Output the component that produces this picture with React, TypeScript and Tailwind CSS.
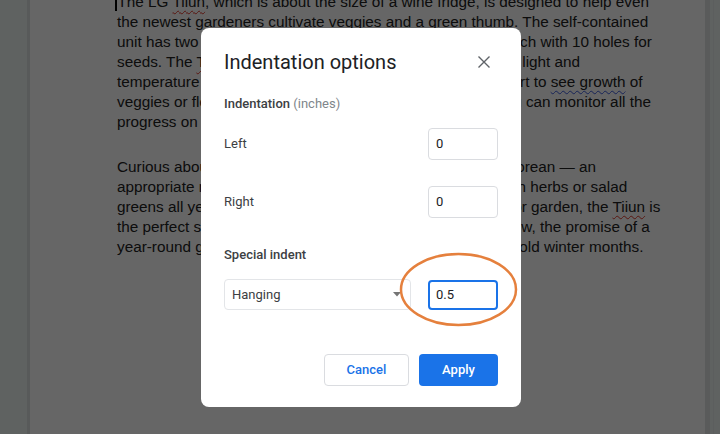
import React from "react";

const spell = "underline decoration-wavy decoration-[#e0392b] decoration-1 underline-offset-[3px]";
const grammar = "underline decoration-wavy decoration-[#3b5bdb] decoration-1 underline-offset-[3px]";

const DocPage = () => (
    <div className="flex h-[434px] w-[720px] overflow-hidden bg-[#eef5f2]">
        <div className="w-[27px] shrink-0" />
        <div className="w-[3px] shrink-0 bg-[#dde2e0]" />
        <div className="flex-1 bg-white pl-[87px]">
            <div
                className="-mt-[8px] text-[15.3px] leading-[20px] text-[#222] whitespace-nowrap"
                style={{ fontFamily: '"Liberation Sans", Arial, sans-serif' }}
            >
                <div>
                    <span className="inline-block w-[1.5px] h-[19px] bg-black -ml-[2px] mr-[1px] align-[-4px]" />
                    The LG <span className={spell}>Tiiun</span>, which is about the size of a wine fridge, is designed to help even
                </div>
                <div>the newest gardeners cultivate veggies and a green thumb. The self-contained</div>
                <div>unit has two growing beds, which come with a seed mat, each with 10 holes for</div>
                <div>
                    seeds. The <span className={spell}>Tiiun</span> uses its own LED lamps to ensure optimal light and
                </div>
                <div>
                    temperature for the plants, and so owners can expect to start to <span className={grammar}>see growth</span> of
                </div>
                <div>veggies or flowers within two weeks. Using its own app, you can monitor all the</div>
                <div>progress on the smartphone.</div>
                <div className="h-[25px]" />
                <div>Curious about the Tiiun? Right now it's coming out first in Korean — an</div>
                <div>appropriate market for a new gadget that lets you grow fresh herbs or salad</div>
                <div>
                    greens all year-round. If you are in need of a compact indoor garden, the <span className={spell}>Tiiun</span> is
                </div>
                <div>the perfect solution: even as you're snowed in by heavy snow, the promise of a</div>
                <div>year-round garden can help you to get through those long cold winter months.</div>
            </div>
        </div>
        <div className="w-[5px] shrink-0 bg-[#e2e4e4]" />
        <div className="w-[10px] shrink-0 bg-[#eef5f2] flex">
            <div className="w-[3px]" />
            <div className="w-px bg-[#e6eceb]" />
        </div>
    </div>
);

const IndentDialog = () => (
    <div
        className="absolute left-[201px] top-[28px] w-[320px] h-[379px] rounded-[8px] bg-white px-[23px] pt-[20px] flex flex-col"
        style={{ fontFamily: 'Roboto, "Open Sans", Arial, sans-serif' }}
    >
        <div className="flex items-center justify-between h-[28px]">
            <div className="text-[20px] text-[#202124]">Indentation options</div>
            <svg width="14" height="14" viewBox="0 0 14 14" className="mr-[7px]">
                <path d="M1.5 1.5 L12.5 12.5 M12.5 1.5 L1.5 12.5" stroke="#5f6368" strokeWidth="1.4" fill="none" />
            </svg>
        </div>

        <div className="mt-[18px] h-[20px] leading-[20px] text-[13px]">
            <span className="font-medium text-[#3c4043]">Indentation</span>{" "}
            <span className="text-[#80868b]">(inches)</span>
        </div>

        <div className="mt-[14px] flex items-center justify-between">
            <span className="text-[13px] text-[#3c4043]">Left</span>
            <div className="w-[70px] h-[32px] rounded-[4px] border border-[#dadce0] pl-[7px] flex items-center text-[13px] text-[#202124]">
                0
            </div>
        </div>

        <div className="mt-[26px] flex items-center justify-between">
            <span className="text-[13px] text-[#3c4043]">Right</span>
            <div className="w-[70px] h-[32px] rounded-[4px] border border-[#dadce0] pl-[7px] flex items-center text-[13px] text-[#202124]">
                0
            </div>
        </div>

        <div className="mt-[27px] h-[20px] leading-[20px] text-[13px] font-medium text-[#3c4043]">Special indent</div>

        <div className="mt-[14px] flex items-center justify-between">
            <div className="w-[187px] h-[31px] rounded-[4px] border border-[#e3e5e8] pl-[7px] pr-[9px] flex items-center justify-between text-[13px] text-[#3c4043]">
                <span>Hanging</span>
                <svg width="8" height="5" viewBox="0 0 8 5">
                    <path d="M0 0 L8 0 L4 4.5 Z" fill="#757575" />
                </svg>
            </div>
            <div className="w-[70px] h-[30px] rounded-[4px] border-2 border-[#1a73e8] pl-[6px] flex items-center text-[13px] text-[#202124]">
                0.5
            </div>
        </div>

        <div className="mt-[44px] flex justify-end gap-[10px]">
            <button className="w-[85px] h-[32px] rounded-[4px] border border-[#dadce0] bg-white text-[13px] font-medium text-[#1a73e8]">
                Cancel
            </button>
            <button className="w-[79px] h-[32px] rounded-[4px] bg-[#1a73e8] text-[13px] font-medium text-white">
                Apply
            </button>
        </div>
    </div>
);

export default function App() {
    return (
        <div className="relative w-[720px] h-[434px] overflow-hidden">
            <DocPage />
            {/* modal scrim */}
            <div className="absolute inset-0 bg-black/60" />
            <IndentDialog />
            {/* annotation circle */}
            <svg className="absolute left-0 top-0 pointer-events-none" width="720" height="434">
                <ellipse cx="458.5" cy="289.5" rx="57.5" ry="35.5" fill="none" stroke="#e5803d" strokeWidth="2.5" />
            </svg>
        </div>
    );
}
